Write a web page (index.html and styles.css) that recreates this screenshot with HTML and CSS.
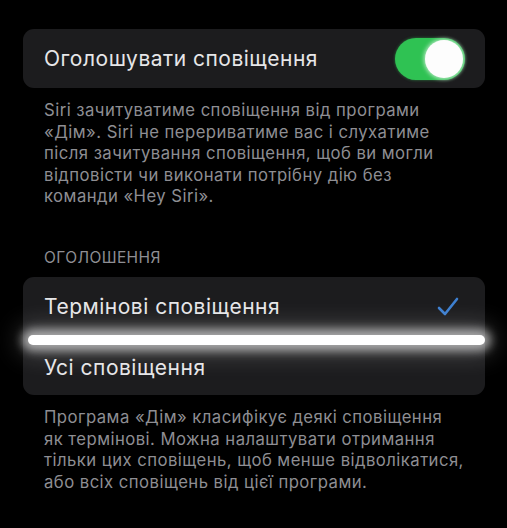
FILE: index.html
```html
<!DOCTYPE html>
<html lang="uk">
<head>
<meta charset="utf-8">
<link rel="stylesheet" href="styles.css">
</head>
<body>
<div class="screen">
  <div class="card">
    <div class="row">
      <span class="label">Оголошувати сповіщення</span>
      <span class="toggle"><span class="knob"></span></span>
    </div>
  </div>
  <p class="footer">Siri зачитуватиме сповіщення від програми «Дім». Siri не перериватиме вас і слухатиме після зачитування сповіщення, щоб ви могли відповісти чи виконати потрібну дію без команди «Hey Siri».</p>
  <div class="header">ОГОЛОШЕННЯ</div>
  <div class="card">
    <div class="row row-top">
      <span class="label">Термінові сповіщення</span>
      <svg class="check" width="22" height="20" viewBox="0 0 22 20"><polyline points="2,11 8,17 20,2" fill="none" stroke="#3d7fd0" stroke-width="2.6" stroke-linecap="round" stroke-linejoin="round"/></svg>
    </div>
    <div class="sep"></div>
    <div class="row row-bottom">
      <span class="label">Усі сповіщення</span>
    </div>
  </div>
  <p class="footer footer-2">Програма «Дім» класифікує деякі сповіщення як термінові. Можна налаштувати отримання тільки цих сповіщень, щоб менше відволікатися, або всіх сповіщень від цієї програми.</p>
</div>
</body>
</html>
```
FILE: styles.css
```css
html, body {
  margin: 0;
  padding: 0;
  background: #000;
}
.screen {
  width: 507px;
  height: 528px;
  box-sizing: border-box;
  padding: 29px 22px 0 23px;
  font-family: Inter, "Noto Sans", sans-serif;
  overflow: hidden;
}
.card {
  background: #1c1c1e;
  border-radius: 11px;
  display: flex;
  flex-direction: column;
}
.row {
  height: 59px;
  padding: 0 20px 0 21px;
  display: flex;
  align-items: center;
  justify-content: space-between;
}
.row-top {
  height: 58px;
  padding-top: 2px;
  box-sizing: border-box;
}
.row-bottom {
  height: 50px;
  padding-bottom: 5px;
  box-sizing: border-box;
}
.label {
  color: #e6e6e8;
  font-size: 21px;
  letter-spacing: 0.5px;
}
.toggle {
  width: 70px;
  height: 42px;
  border-radius: 21px;
  background: #2fc253;
  position: relative;
  box-shadow: 0 0 3px rgba(60, 220, 100, 0.5);
}
.knob {
  position: absolute;
  right: 2px;
  top: 2px;
  width: 38px;
  height: 38px;
  border-radius: 50%;
  background: #fdfdfd;
  box-shadow: 0 0 4px 1px rgba(255, 255, 255, 0.7);
}
.check {
  margin-right: 6px;
}
.sep {
  height: 10px;
  margin-left: 5px;
  border-radius: 5px;
  background: #fff;
  box-shadow: 0 0 10px 6px rgba(255, 255, 255, 0.55), 0 0 24px 10px rgba(255, 255, 255, 0.2);
}
.footer {
  margin: 0;
  padding: 12px 19px 0 21px;
  color: #8e8e93;
  font-size: 16.7px;
  letter-spacing: 0.45px;
  line-height: 21.6px;
}
.header {
  margin-top: 40px;
  padding-left: 21px;
  color: #8e8e93;
  font-size: 15.5px;
  letter-spacing: 0.4px;
  line-height: 20px;
  height: 29px;
}
```
